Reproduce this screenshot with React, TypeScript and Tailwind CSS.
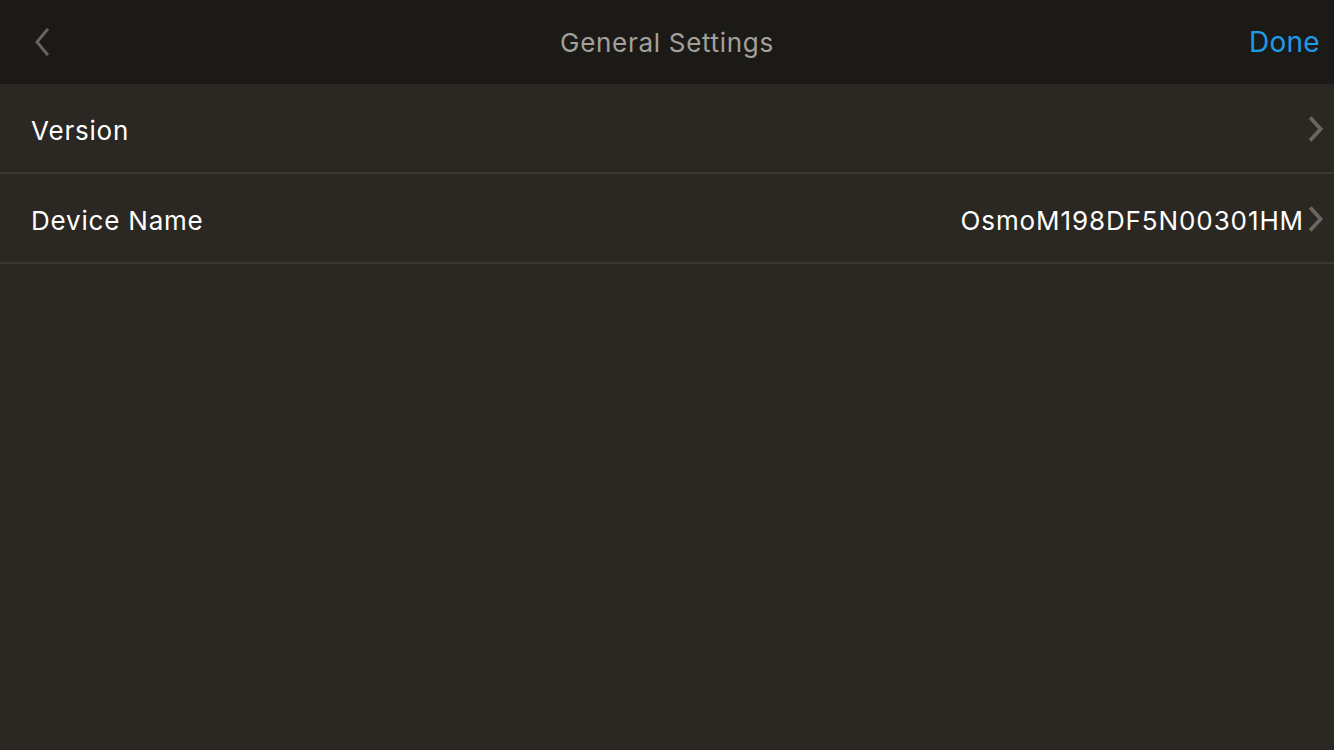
import React from 'react';

const Chevron: React.FC<{ dir: 'left' | 'right'; className?: string; sw?: number }> = ({ dir, className, sw = 3 }) => (
	<svg viewBox="0 0 16 28" className={className} fill="none" stroke="currentColor" strokeWidth={sw} strokeLinecap="square">
		{dir === 'left' ? <path d="M13 2 L3 14 L13 26" /> : <path d="M3 3 L13 14 L3 25" />}
	</svg>
);

const rows = [
	{ label: 'Version', value: '' },
	{ label: 'Device Name', value: 'OsmoM198DF5N00301HM' },
];

export default function App() {
	return (
		<div
			className="w-[1334px] h-[750px] overflow-hidden bg-[#2b2722] text-white flex flex-col"
			style={{ fontFamily: 'Inter, "Noto Sans", sans-serif' }}
		>
			{/* Header */}
			<div className="h-[84px] shrink-0 bg-[#1c1a17] flex items-center justify-between px-[34px] pr-[14px] relative">
				<Chevron dir="left" className="w-[16px] h-[28px] text-[#66635f]" />
				<span className="absolute left-1/2 -translate-x-1/2 text-[26px] text-[#a3a09c] tracking-[0.7px]">General Settings</span>
				<span className="text-[28px] text-[#1d9ae6] tracking-[0.3px]">Done</span>
			</div>

			{/* Rows */}
			<div className="flex flex-col">
				{rows.map((row) => (
					<div key={row.label} className="h-[90px] flex items-center justify-between pl-[31px] pr-[10px] pt-[4px] border-b-2 border-[#3b3834]">
						<span className="text-[26px] tracking-[0.8px]">{row.label}</span>
						<div className="flex items-center gap-[4px]">
							{row.value && <span className="text-[26px] tracking-[0.9px]">{row.value}</span>}
							<Chevron dir="right" sw={4} className="w-[16px] h-[26px] text-[#6a6763] -mt-[2px]" />
						</div>
					</div>
				))}
			</div>
		</div>
	);
}
